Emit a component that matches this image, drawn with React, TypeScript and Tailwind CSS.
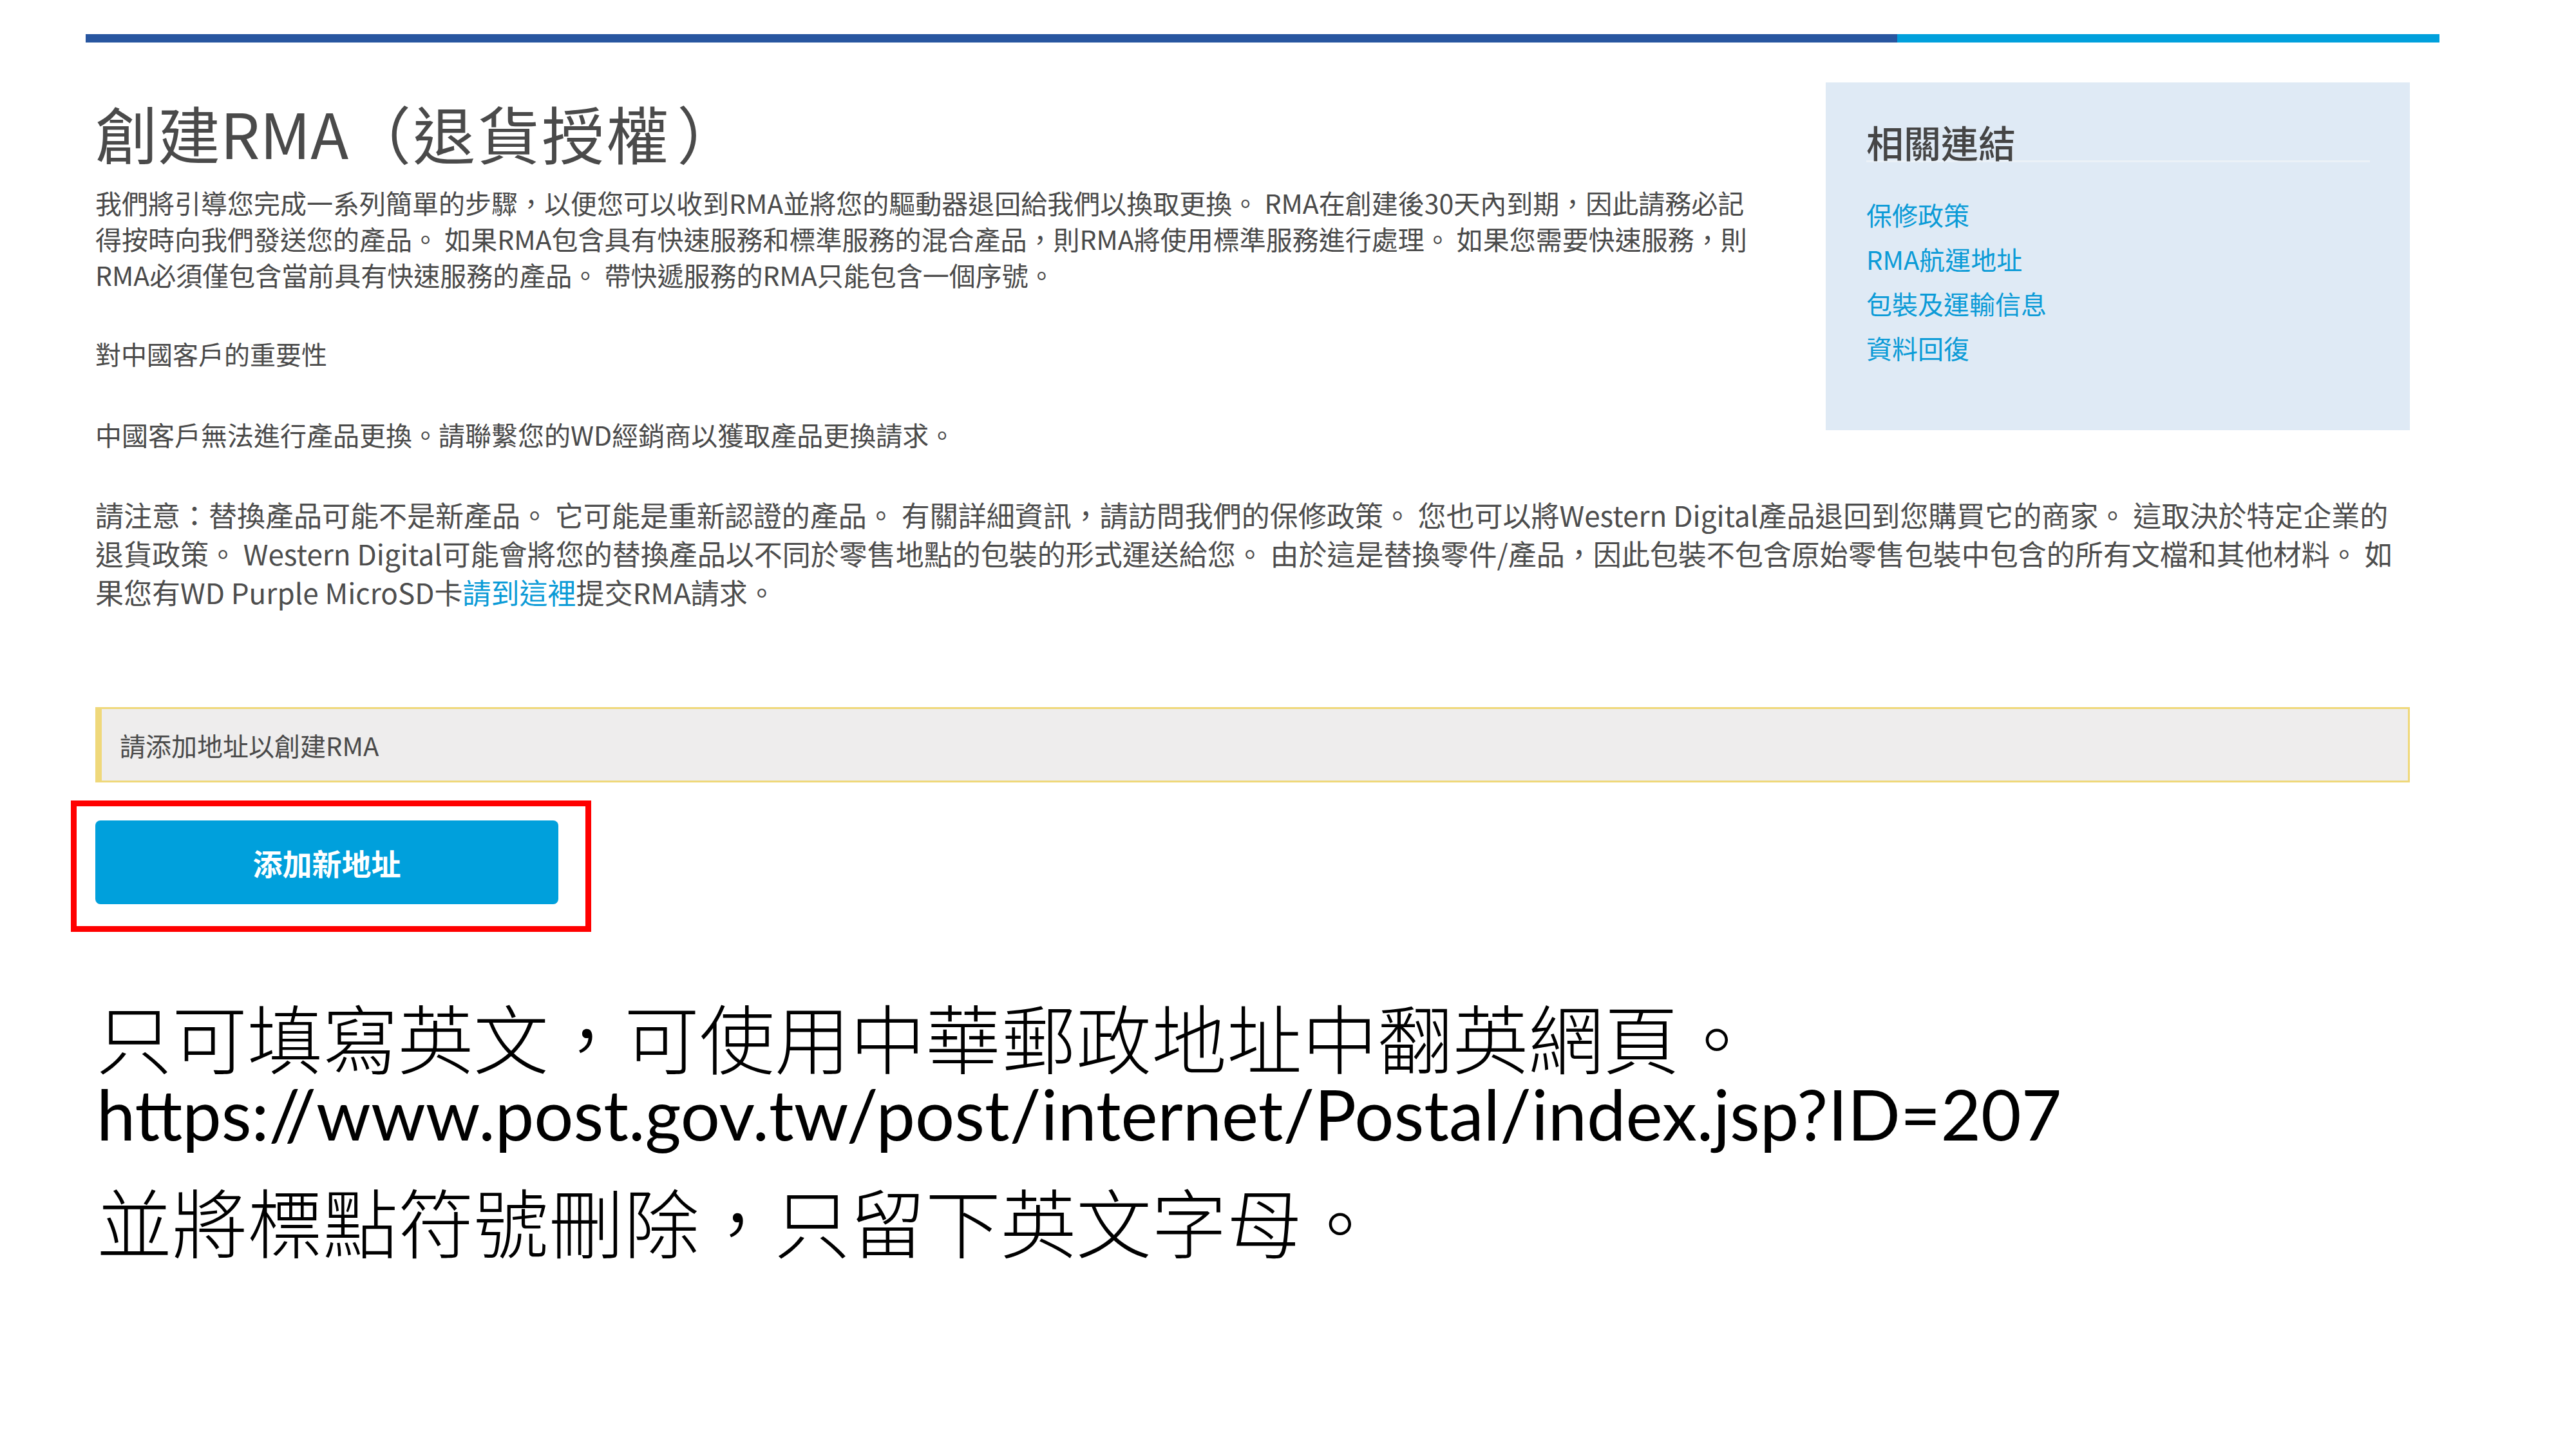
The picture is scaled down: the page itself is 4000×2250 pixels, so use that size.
export default function App() {
  return (
    <div className="w-[4000px] h-[2250px] bg-white overflow-hidden font-['Noto_Sans_CJK_TC',sans-serif]">
      {/* top colour bar */}
      <div className="flex ml-[133px] pt-[53px] w-[3655px]">
        <div className="h-[13px] w-[2813px] bg-[#2856a0]" />
        <div className="h-[13px] flex-1 bg-[#00a0dc]" />
      </div>

      <div className="ml-[148px] w-[3594px] text-[#4a4a4a]">
        <div className="flex justify-between items-start mt-[62px]">
          {/* main column */}
          <div className="flex flex-col">
            <h1 className="mt-[28px] text-[97px] leading-[97px] font-normal whitespace-nowrap">
              創建RMA<span className="tracking-[3px]">（退貨授權</span>
              <span className="ml-[10px]">）</span>
            </h1>
            <div className="mt-[33px] text-[41px] leading-[56px] whitespace-nowrap">
              <div>我們將引導您完成一系列簡單的步驟，以便您可以收到RMA並將您的驅動器退回給我們以換取更換。 RMA在創建後30天內到期，因此請務必記</div>
              <div>得按時向我們發送您的產品。 如果RMA包含具有快速服務和標準服務的混合產品，則RMA將使用標準服務進行處理。 如果您需要快速服務，則</div>
              <div>RMA必須僅包含當前具有快速服務的產品。 帶快遞服務的RMA只能包含一個序號。</div>
            </div>
            <p className="mt-[67px] text-[40px] leading-[56px]">對中國客戶的重要性</p>
            <p className="mt-[69px] text-[41px] leading-[56px] whitespace-nowrap">
              中國客戶無法進行產品更換。請聯繫您的WD經銷商以獲取產品更換請求。
            </p>
          </div>

          {/* sidebar */}
          <aside className="w-[907px] h-[540px] bg-[#dfeaf5] pl-[63px] pr-[62px] pt-[64px]">
            <h2 className="text-[58px] leading-[57px] font-medium text-[#454545] border-b-[3px] border-[#ebf1f7]">
              相關連結
            </h2>
            <ul className="mt-[47px] text-[40px] leading-[69px] text-[#0b9bd7]">
              <li>保修政策</li>
              <li>RMA航運地址</li>
              <li>包裝及運輸信息</li>
              <li>資料回復</li>
            </ul>
          </aside>
        </div>

        {/* notice */}
        <div className="mt-[67px] text-[44px] leading-[60px] whitespace-nowrap text-[#4d4d4d]">
          <div>請注意：替換產品可能不是新產品。 它可能是重新認證的產品。 有關詳細資訊，請訪問我們的保修政策。 您也可以將Western Digital產品退回到您購買它的商家。 這取決於特定企業的</div>
          <div>退貨政策。 Western Digital可能會將您的替換產品以不同於零售地點的包裝的形式運送給您。 由於這是替換零件/產品，因此包裝不包含原始零售包裝中包含的所有文檔和其他材料。 如</div>
          <div>
            果您有WD Purple MicroSD卡<span className="text-[#0b9bd7]">請到這裡</span>提交RMA請求。
          </div>
        </div>

        {/* alert */}
        <div className="mt-[149px] h-[117px] flex items-center bg-[#eeeded] border-l-[10px] border-y-[3px] border-r-[3px] border-[#efd87a] pl-[28px]">
          <span className="text-[40px] leading-[40px] text-[#4a4a4a]">請添加地址以創建RMA</span>
        </div>

        {/* highlighted button */}
        <div className="-ml-[38px] mt-[28px] w-[808px] h-[204px] border-[9px] border-[#ff0000] pl-[29px] pt-[22px]">
          <button className="w-[719px] h-[130px] rounded-[8px] bg-[#00a0dc] text-white text-[46px] font-bold flex items-center justify-center">
            添加新地址
          </button>
        </div>

        {/* annotation */}
        <div className="ml-[2px] text-black">
          <p className="mt-[103px] text-[117px] leading-[117px] font-light whitespace-nowrap">
            只可填寫英文，可使用中華郵政地址中翻英網頁。
          </p>
          <p className="mt-[3px] text-[108px] leading-[118px] font-['Lato',sans-serif] whitespace-nowrap">
            https://www.post.gov.tw/post/internet/Postal/index.jsp?ID=207
          </p>
          <p className="mt-[48px] text-[117px] leading-[117px] font-light whitespace-nowrap">
            並將標點符號刪除，只留下英文字母。
          </p>
        </div>
      </div>
    </div>
  );
}
